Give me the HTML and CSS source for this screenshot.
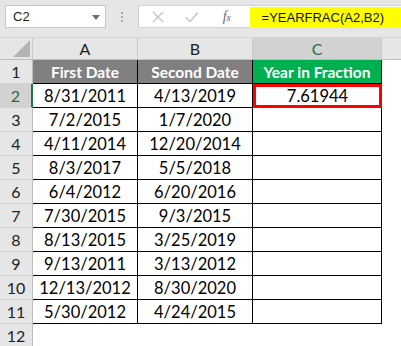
FILE: index.html
```html
<!DOCTYPE html>
<html>
<head>
<meta charset="utf-8">
<link rel="stylesheet" href="styles.css">
</head>
<body>
<div class="app">
  <div class="fbar">
    <div class="namebox"><span class="ref">C2</span><span class="caret"></span></div>
    <div class="dots"><i></i><i></i><i></i></div>
    <div class="btns">
      <svg class="x" width="12" height="12" viewBox="0 0 12 12"><path d="M1 1L11 11M11 1L1 11" stroke="#c3c3c3" stroke-width="1.4" fill="none"/></svg>
      <svg class="ok" width="14" height="12" viewBox="0 0 14 12"><path d="M1 6.5L5 10.5L13 1.5" stroke="#c3c3c3" stroke-width="1.4" fill="none"/></svg>
      <span class="fx">f<sub>x</sub></span>
    </div>
    <div class="formula"><span class="ftext">=YEARFRAC(A2,B2)</span></div>
  </div>
  <div class="sheet">
    <div class="corner"><span class="tri"></span></div>
    <div class="ch">A</div>
    <div class="ch">B</div>
    <div class="ch sel">C</div>
    <div class="ch last"></div>

    <div class="rh">1</div>
    <div class="c hd">First Date</div>
    <div class="c hd">Second Date</div>
    <div class="c hd green">Year in Fraction</div>
    <div class="e"></div>

    <div class="rh sel">2</div>
    <div class="c">8/31/2011</div>
    <div class="c">4/13/2019</div>
    <div class="c active">7.61944</div>
    <div class="e"></div>

    <div class="rh">3</div><div class="c">7/2/2015</div><div class="c">1/7/2020</div><div class="c"></div><div class="e"></div>
    <div class="rh">4</div><div class="c">4/11/2014</div><div class="c">12/20/2014</div><div class="c"></div><div class="e"></div>
    <div class="rh">5</div><div class="c">8/3/2017</div><div class="c">5/5/2018</div><div class="c"></div><div class="e"></div>
    <div class="rh">6</div><div class="c">6/4/2012</div><div class="c">6/20/2016</div><div class="c"></div><div class="e"></div>
    <div class="rh">7</div><div class="c">7/30/2015</div><div class="c">9/3/2015</div><div class="c"></div><div class="e"></div>
    <div class="rh">8</div><div class="c">8/13/2015</div><div class="c">3/25/2019</div><div class="c"></div><div class="e"></div>
    <div class="rh">9</div><div class="c">9/13/2011</div><div class="c">3/13/2012</div><div class="c"></div><div class="e"></div>
    <div class="rh">10</div><div class="c">12/13/2012</div><div class="c">8/30/2020</div><div class="c"></div><div class="e"></div>
    <div class="rh">11</div><div class="c">5/30/2012</div><div class="c">4/24/2015</div><div class="c"></div><div class="e"></div>
    <div class="rh">12</div><div class="b"></div><div class="b"></div><div class="b"></div><div class="e"></div>
  </div>
</div>
</body>
</html>
```
FILE: styles.css
```css
* { box-sizing: border-box; }
html, body { margin: 0; padding: 0; background: #ffffff; }
body { width: 401px; height: 346px; overflow: hidden; font-family: Lato, "Liberation Sans", sans-serif; }
.app { width: 401px; }
.fbar {
  height: 38px;
  background: #e6e6e6;
  display: flex;
  align-items: flex-start;
  padding-top: 5px;
  padding-left: 5px;
  border-bottom: 1px solid #d6d6d6;
}
.namebox {
  width: 102px; height: 23px;
  background: #fff;
  border: 1px solid #c6c6c6;
  display: flex; align-items: center; justify-content: space-between;
  padding: 0 5px 0 7px;
  font-family: "Liberation Sans", sans-serif; font-size: 13px; color: #222;
}
.caret { width: 0; height: 0; border-left: 4px solid transparent; border-right: 4px solid transparent; border-top: 5px solid #6e6e6e; margin-top: 1px; }
.dots { width: 32px; height: 23px; display: flex; flex-direction: column; align-items: center; justify-content: center; gap: 2px; }
.dots i { display: block; width: 2px; height: 2px; background: #a8a8a8; }
.btns {
  width: 113px; height: 23px;
  background: #fff;
  border: 1px solid #d2d2d2;
  border-right: none;
  display: flex; align-items: center;
  padding-left: 13px;
}
.btns .x { margin-right: 21px; }
.btns .ok { margin-right: 24px; }
.fx { font-family: "Liberation Serif", serif; font-style: italic; font-size: 14px; color: #6a6a6a; }
.fx sub { font-size: 10px; vertical-align: 0; }
.formula {
  flex: 1; height: 23px; background: #fff;
  border: 1px solid #d2d2d2; border-left: none; border-right: none;
}
.ftext {
  display: inline-block; height: 21px; line-height: 21px;
  background: #ffff00; padding: 0 17px 0 12px;
  font-family: "Liberation Sans", sans-serif; font-size: 13px; color: #111;
}
.sheet {
  display: grid;
  grid-template-columns: 33px 105px 115px 129px 19px;
  grid-template-rows: 22px repeat(12, 24px);
}
.corner { background: #e6e6e6; border-right: 1px solid #c8c8c8; border-bottom: 1px solid #bdbdbd; position: relative; }
.tri { position: absolute; right: 2px; bottom: 2px; width: 0; height: 0; border-left: 17px solid transparent; border-bottom: 17px solid #b4b4b4; }
.ch {
  background: #e6e6e6; border-right: 1px solid #c8c8c8; border-bottom: 1px solid #bdbdbd;
  display: flex; align-items: center; justify-content: center;
  font-family: Lato, sans-serif; font-size: 16px; color: #222;
}
.ch.sel { background: #d2d2d2; color: #1f6e43; border-bottom: 1px solid #bdbdbd; }
.ch.last { border-right: none; }
.rh {
  background: #e6e6e6; border-right: 1px solid #bdbdbd; border-bottom: 1px solid #d4d4d4;
  display: flex; align-items: center; justify-content: center;
  font-size: 16px; color: #222;
}
.rh.sel { background: #d2d2d2; color: #1f6e43; border-right: 2px solid #217346; }
.c {
  border-right: 1px solid #000; border-bottom: 1px solid #000;
  display: flex; align-items: center; justify-content: center;
  font-size: 16.5px; color: #000;
}
.hd { background: #808080; color: #fff; font-weight: 700; font-size: 15.5px; }
.green { background: #00b050; }
.active { border: 3px solid #ff0000; }
.e { background: #fff; }
.b { background: #fff; }
```
